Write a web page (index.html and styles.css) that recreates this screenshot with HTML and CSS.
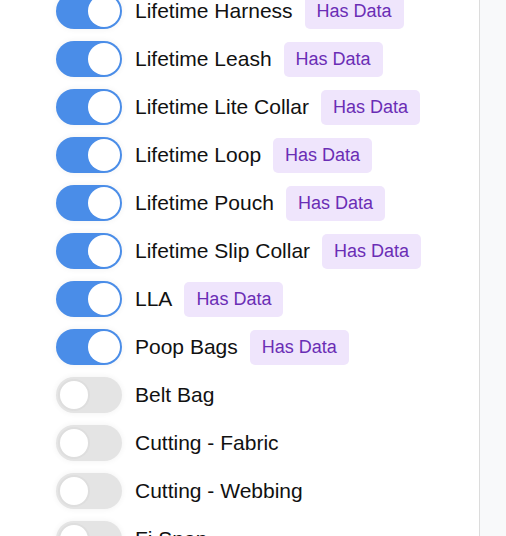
FILE: index.html
```html
<!DOCTYPE html>
<html>
<head>
<meta charset="utf-8">
<link rel="stylesheet" href="styles.css">
</head>
<body>
<div class="layout">
  <main class="main">
    <ul class="list">
      <li class="row"><span class="toggle on"><span class="knob"></span></span><span class="label">Lifetime Harness</span><span class="badge">Has Data</span></li>
      <li class="row"><span class="toggle on"><span class="knob"></span></span><span class="label">Lifetime Leash</span><span class="badge">Has Data</span></li>
      <li class="row"><span class="toggle on"><span class="knob"></span></span><span class="label">Lifetime Lite Collar</span><span class="badge">Has Data</span></li>
      <li class="row"><span class="toggle on"><span class="knob"></span></span><span class="label">Lifetime Loop</span><span class="badge">Has Data</span></li>
      <li class="row"><span class="toggle on"><span class="knob"></span></span><span class="label">Lifetime Pouch</span><span class="badge">Has Data</span></li>
      <li class="row"><span class="toggle on"><span class="knob"></span></span><span class="label">Lifetime Slip Collar</span><span class="badge">Has Data</span></li>
      <li class="row"><span class="toggle on"><span class="knob"></span></span><span class="label">LLA</span><span class="badge">Has Data</span></li>
      <li class="row"><span class="toggle on"><span class="knob"></span></span><span class="label">Poop Bags</span><span class="badge">Has Data</span></li>
      <li class="row"><span class="toggle"><span class="knob"></span></span><span class="label">Belt Bag</span></li>
      <li class="row"><span class="toggle"><span class="knob"></span></span><span class="label">Cutting - Fabric</span></li>
      <li class="row"><span class="toggle"><span class="knob"></span></span><span class="label">Cutting - Webbing</span></li>
      <li class="row"><span class="toggle"><span class="knob"></span></span><span class="label">Fi Snap</span></li>
    </ul>
  </main>
  <aside class="side"></aside>
</div>
</body>
</html>
```

FILE: styles.css
```css
html, body {
  margin: 0;
  padding: 0;
  height: 100%;
  overflow: hidden;
  background: #ffffff;
  font-family: "Liberation Sans", Arial, Helvetica, sans-serif;
}
.layout {
  display: flex;
  height: 100%;
}
.main {
  width: 479px;
  flex: none;
  border-right: 1px solid #dcdcdc;
  background: #ffffff;
  overflow: hidden;
}
.side {
  flex: 1;
  background: #f8f9fa;
}
.list {
  list-style: none;
  margin: -7px 0 0 0;
  padding: 0 0 0 56px;
  display: flex;
  flex-direction: column;
  gap: 12px;
}
.row {
  display: flex;
  align-items: center;
  height: 36px;
}
.toggle {
  position: relative;
  flex: none;
  width: 66px;
  height: 36px;
  border-radius: 18px;
  background: #e4e4e4;
  box-shadow: 0 0 6px rgba(0, 0, 0, 0.06);
  margin-right: 13px;
}
.toggle.on {
  background: #4a8de8;
}
.knob {
  position: absolute;
  top: 2px;
  left: 2px;
  width: 32px;
  height: 32px;
  border-radius: 50%;
  background: #ffffff;
  box-sizing: border-box;
  border: 2px solid #dedede;
}
.toggle.on .knob {
  left: 32px;
  border: none;
}
.label {
  font-size: 21px;
  color: #111111;
  white-space: nowrap;
}
.badge {
  margin-left: 12px;
  background: #efe5fc;
  color: #6a2db5;
  font-size: 18px;
  line-height: 35px;
  height: 35px;
  padding: 0 12px;
  border-radius: 5px;
  white-space: nowrap;
}
```
